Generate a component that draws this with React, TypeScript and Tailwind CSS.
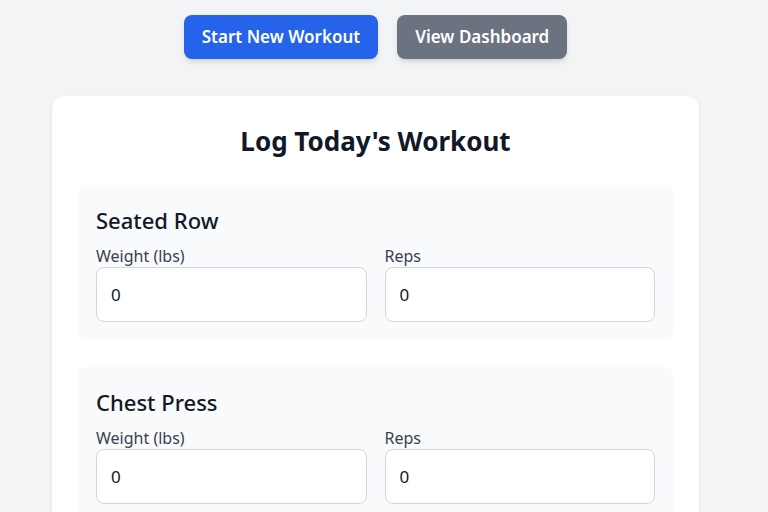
const exercises = ['Seated Row', 'Chest Press'];

function Field({ label }: { label: string }) {
  return (
    <label className="flex flex-col">
      <span className="text-base leading-5 text-[#374151] mb-[1px]">{label}</span>
      <input
        type="number"
        defaultValue={0}
        className="h-[55px] w-full rounded-lg border border-gray-300 bg-white px-[14px] text-[17px] text-[#111827] outline-none"
      />
    </label>
  );
}

export default function App() {
  return (
    <div className="min-h-screen bg-[#f3f4f6] font-['Noto_Sans',sans-serif] overflow-hidden">
      <div className="w-[751px] flex flex-col items-center pt-[15px]">
        <div className="flex gap-[19px]">
          <button className="h-[44px] px-[18px] rounded-lg bg-[#2563eb] text-white text-[17px] font-semibold shadow-md">
            Start New Workout
          </button>
          <button className="h-[44px] px-[18px] rounded-lg bg-[#6b7280] text-white text-[17px] font-semibold shadow-md">
            View Dashboard
          </button>
        </div>

        <div className="mt-[37px] w-[647px] rounded-xl bg-white shadow-sm px-[26px] pt-[27px] pb-6">
          <h1 className="text-center text-[26px] leading-9 font-bold text-[#111827] mb-[26px]">
            Log Today's Workout
          </h1>
          <div className="flex flex-col gap-[27px]">
            {exercises.map((name) => (
              <div key={name} className="rounded-lg bg-[#f9fafb] px-[18px] pt-[19px] pb-[18px]">
                <h2 className="text-[22px] leading-8 font-medium text-[#111827] mb-[10px]">{name}</h2>
                <div className="grid grid-cols-2 gap-[18px]">
                  <Field label="Weight (lbs)" />
                  <Field label="Reps" />
                </div>
              </div>
            ))}
          </div>
        </div>
      </div>
    </div>
  );
}
